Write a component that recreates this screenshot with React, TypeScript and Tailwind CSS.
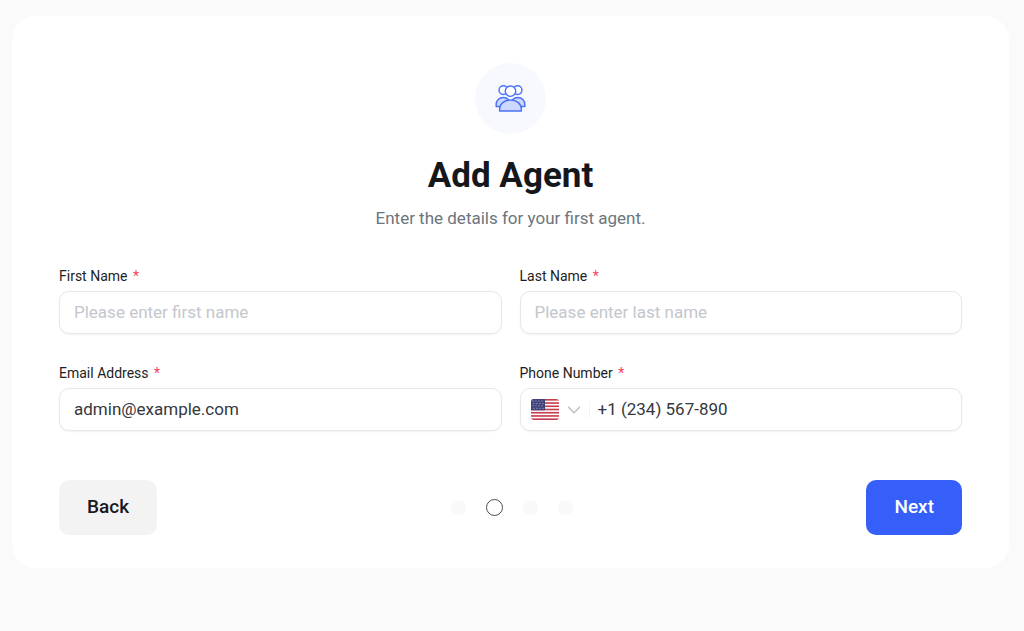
import React, { useState } from "react";
import clsx from "clsx";

const TeamIcon = () => (
  <svg
    width="31"
    height="31"
    viewBox="0 0 32 32"
    fill="none"
    stroke="#4b73fa"
    strokeWidth="1.5"
    strokeLinejoin="round"
    aria-hidden="true"
  >
    <circle cx="8.7" cy="7.3" r="4.5" fill="#fff" />
    <circle cx="23.3" cy="7.3" r="4.5" fill="#fff" />
    <path
      d="M1.2 24.2v-1.7c0-4.3 3-7.5 7.3-7.5 2.1 0 3.9.7 5.2 2l-6 7.2z"
      fill="#cdd8fe"
    />
    <path
      d="M30.8 24.2v-1.7c0-4.3-3-7.5-7.3-7.5-2.1 0-3.9.7-5.2 2l6 7.2z"
      fill="#cdd8fe"
    />
    <circle cx="16" cy="8.4" r="5.4" fill="#fff" />
    <path
      d="M4.8 28.8v-1.9c0-5.3 4.6-9.4 11.2-9.4s11.2 4.1 11.2 9.4v1.9z"
      fill="#cdd8fe"
    />
  </svg>
);

const FlagUS = () => (
  <svg
    width="28"
    height="21"
    viewBox="0 0 28 21"
    className="rounded-[3px]"
    aria-hidden="true"
  >
    <rect width="28" height="21" fill="#fff" />
    {[0, 2, 4, 6, 8, 10, 12].map((i) => (
      <rect key={i} y={(i * 21) / 13} width="28" height={21 / 13} fill="#c63d4f" />
    ))}
    <rect width="14" height={(21 * 7) / 13} fill="#41437c" />
    {[0, 1, 2, 3].map((row) =>
      [0, 1, 2, 3].map((col) => (
        <circle
          key={`${row}-${col}`}
          cx={2 + col * 3 + (row % 2)}
          cy={2 + row * 2.4}
          r="0.5"
          fill="#d5d6e6"
        />
      ))
    )}
  </svg>
);

const Chevron = () => (
  <svg
    width="14"
    height="14"
    viewBox="0 0 14 14"
    fill="none"
    stroke="#bfc3c9"
    strokeWidth="1.6"
    strokeLinecap="round"
    strokeLinejoin="round"
    aria-hidden="true"
  >
    <path d="M1.5 4.2 7 9.8l5.5-5.6" />
  </svg>
);

type FieldProps = {
  id: string;
  label: string;
  children: React.ReactNode;
};

const Field = ({ id, label, children }: FieldProps) => (
  <div className="min-w-0">
    <label htmlFor={id} className="mb-[5px] block text-sm text-[#1c1e22]">
      {label} <span className="ml-0.5 text-[#fb3e5c]">*</span>
    </label>
    <div className="flex h-[43px] overflow-hidden rounded-[10px] border border-[#e7e8ea] bg-white shadow-xs focus-within:border-[#355ff8]">
      {children}
    </div>
  </div>
);

const inputClass =
  "min-w-0 flex-1 bg-transparent text-[17px] text-[#34383e] outline-none placeholder:text-[#c3c7cd]";

const steps = ["Company", "Agent", "Properties", "Finish"];

const App = () => {
  const [form, setForm] = useState({
    firstName: "",
    lastName: "",
    email: "admin@example.com",
    phone: "+1 (234) 567-890",
  });

  const onChange = (e: React.ChangeEvent<HTMLInputElement>) => {
    setForm({ ...form, [e.target.name]: e.target.value });
  };

  return (
    <div className="min-h-screen bg-[#fafafa] pt-4 pr-[15px] pb-4 pl-3 font-[Roboto,sans-serif]">
      <form
        className="rounded-3xl bg-white px-[47px] pt-[47px] pb-[33px]"
        onSubmit={(e) => e.preventDefault()}
      >
        <div className="flex flex-col items-center text-center">
          <div className="flex size-[71px] items-center justify-center rounded-full bg-[#f7f9ff]">
            <TeamIcon />
          </div>
          <h1 className="mt-5 text-[35px] leading-11 font-bold text-[#15171b]">
            Add Agent
          </h1>
          <p className="mt-2 text-[17px] leading-6 text-[#6c757d]">
            Enter the details for your first agent.
          </p>
        </div>

        <div className="mt-9 grid grid-cols-2 gap-x-[18px] gap-y-[29px]">
          <Field id="firstName" label="First Name">
            <input
              id="firstName"
              name="firstName"
              type="text"
              placeholder="Please enter first name"
              value={form.firstName}
              onChange={onChange}
              className={clsx(inputClass, "px-3.5")}
            />
          </Field>
          <Field id="lastName" label="Last Name">
            <input
              id="lastName"
              name="lastName"
              type="text"
              placeholder="Please enter last name"
              value={form.lastName}
              onChange={onChange}
              className={clsx(inputClass, "px-3.5")}
            />
          </Field>
          <Field id="email" label="Email Address">
            <input
              id="email"
              name="email"
              type="email"
              value={form.email}
              onChange={onChange}
              className={clsx(inputClass, "px-3.5")}
            />
          </Field>
          <Field id="phone" label="Phone Number">
            <div className="relative my-3 flex items-center gap-2 border-r border-[#f2f3f5] pr-2 pl-2.5">
              <FlagUS />
              <Chevron />
              {/* native select sits over the flag and keeps its own text hidden */}
              <select
                aria-label="Country"
                className="absolute inset-0 w-full cursor-pointer appearance-none opacity-0"
              >
                <option value="US"></option>
              </select>
            </div>
            <input
              id="phone"
              name="phone"
              type="tel"
              value={form.phone}
              onChange={onChange}
              className={clsx(inputClass, "pr-3.5 pl-2")}
            />
          </Field>
        </div>

        <div className="mt-[49px] flex items-center justify-between">
          <button
            type="button"
            className="h-[55px] cursor-pointer rounded-[10px] bg-[#f3f3f3] px-7 text-[19px] font-medium text-[#17191d]"
          >
            Back
          </button>
          <ol className="flex items-center gap-5">
            {steps.map((step, i) => (
              <li
                key={step}
                aria-label={step}
                className={clsx(
                  "rounded-full",
                  i === 1
                    ? "size-[17px] border border-[#4a4c50] bg-white"
                    : "size-[15px] bg-[#f9f9f9]"
                )}
              />
            ))}
          </ol>
          <button
            type="submit"
            className="h-[55px] cursor-pointer rounded-[10px] bg-[#355ff8] px-7 text-[19px] font-medium text-white"
          >
            Next
          </button>
        </div>
      </form>
    </div>
  );
};

export default App;
